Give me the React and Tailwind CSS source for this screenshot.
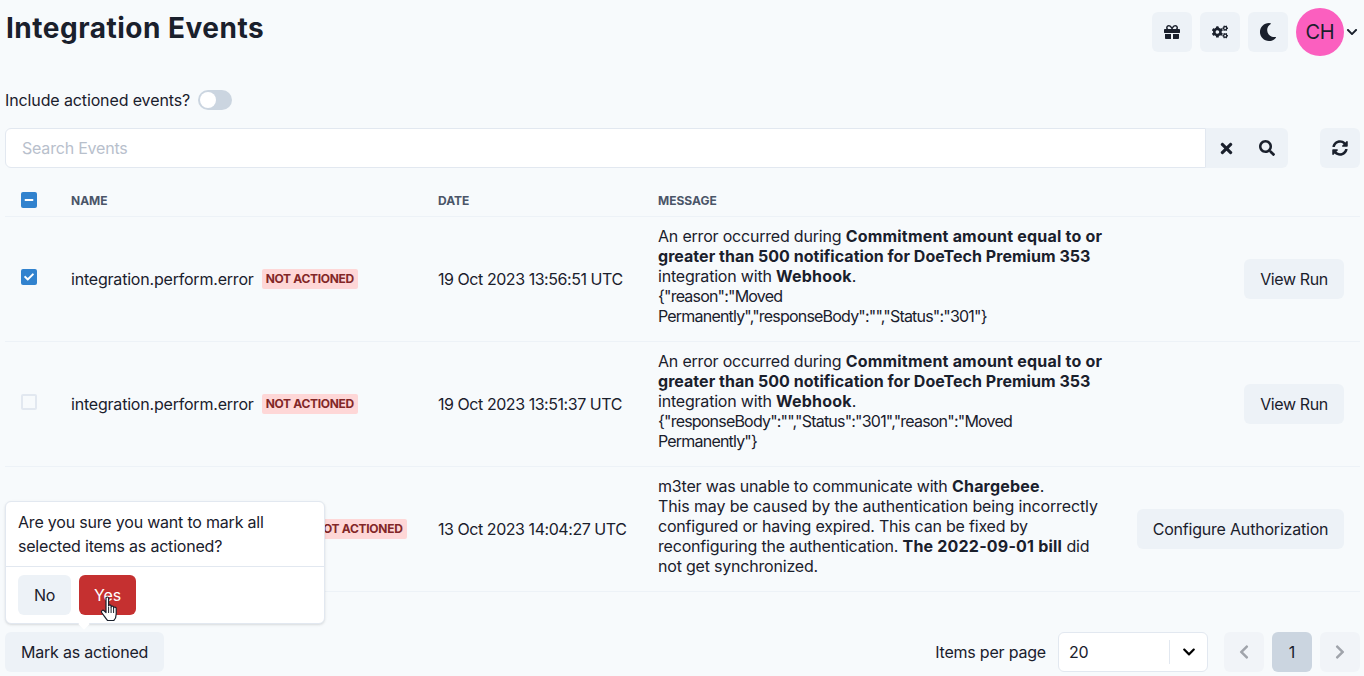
import React from "react";
import { FaGift, FaCogs, FaMoon, FaChevronDown, FaTimes, FaSearch, FaSyncAlt, FaChevronLeft, FaChevronRight, FaCheck, FaMinus } from "react-icons/fa";

const btn = "inline-flex items-center justify-center rounded-md bg-[#edf2f7] text-[#1a202c] text-[16px] font-normal";

function IconBtn({ children, className = "" }) {
  return <button className={`${btn} w-10 h-10 ${className}`}>{children}</button>;
}

function Badge() {
  return (
    <span className="inline-block shrink-0 rounded-[2px] bg-[#fed7d7] px-1 text-[12px] leading-[20px] font-bold uppercase text-[#822727] tracking-[-0.3px]">
      Not actioned
    </span>
  );
}

function Box({ state }) {
  if (state === "checked")
    return <span className="flex w-4 h-4 items-center justify-center rounded-[2px] bg-[#3182ce] text-white"><FaCheck size={10} /></span>;
  if (state === "minus")
    return <span className="flex w-4 h-4 items-center justify-center rounded-[2px] bg-[#3182ce] text-white"><FaMinus size={10} /></span>;
  return <span className="block w-4 h-4 rounded-[2px] border-2 border-[#e2e8f0]" />;
}

function Row({ box, name, nameClass = "", date, action, actionClass = "", children }) {
  return (
    <tr className="h-[125px] border-b border-[#edf2f7]">
      <td className="pl-4 pb-[3px] align-middle"><Box state={box} /></td>
      <td className="pl-4 align-middle">
        <div className="flex items-center gap-2">
          <span className={`whitespace-nowrap ${nameClass}`}>{name}</span>
          <Badge />
        </div>
      </td>
      <td className="pl-4 align-middle whitespace-nowrap tracking-[-0.45px]">{date}</td>
      <td className="pl-4 pr-4 pb-[6px] align-middle leading-[20px]">{children}</td>
      <td className="pr-4 align-middle text-right">
        <button className={`${btn} h-10 ${actionClass}`}>{action}</button>
      </td>
    </tr>
  );
}

const B = ({ children }) => <b className="font-bold tracking-[0.2px]">{children}</b>;
const B2 = ({ children }) => <b className="font-bold tracking-[0.03px]">{children}</b>;
const Json = ({ children }) => <span className="tracking-[-0.8px]">{children}</span>;

export default function App() {
  return (
    <div className="relative h-[676px] w-[1364px] overflow-hidden bg-[#f7fafc] text-[#1a202c] text-[16px] tracking-[-0.2px]" style={{ fontFamily: '"Inter", "Liberation Sans", sans-serif' }}>
      <div className="px-[5px] pr-1">
        <header className="flex items-start justify-between h-[60px] pt-2">
          <h1 className="pl-px pt-1 text-[28px] leading-[32px] font-bold tracking-[0.5px]">Integration Events</h1>
          <div className="flex items-center gap-2 pr-[2px]">
            <IconBtn><FaGift size={16} /></IconBtn>
            <IconBtn><FaCogs size={16} /></IconBtn>
            <IconBtn><FaMoon size={18} /></IconBtn>
            <div className="flex items-center">
              <div className="flex h-12 w-12 items-center justify-center rounded-full bg-[#fb5fbf] text-[20px] font-normal text-[#1a202c]">CH</div>
              <FaChevronDown size={12} className="ml-[2px]" />
            </div>
          </div>
        </header>

        <div className="mt-[28px] flex items-center gap-2 h-6">
          <span className="tracking-[-0.12px]">Include actioned events?</span>
          <span className="flex h-5 w-[34px] items-center rounded-full bg-[#cbd5e0] p-[2px]">
            <span className="h-4 w-4 rounded-full bg-white" />
          </span>
        </div>

        <div className="mt-[16px] flex items-center gap-8">
          <div className="flex h-10 flex-1">
            <div className="flex flex-1 items-center rounded-l-md border border-[#e2e8f0] bg-white pl-4 text-[#b8c0cc]">Search Events</div>
            <button className="flex h-10 w-10 items-center justify-center bg-[#edf2f7]"><FaTimes size={17} /></button>
            <button className="flex h-10 w-[42px] items-center justify-center rounded-r-md bg-[#edf2f7]"><FaSearch size={16} /></button>
          </div>
          <IconBtn><FaSyncAlt size={16} /></IconBtn>
        </div>

        <table className="mt-4 w-[1355px] table-fixed border-collapse">
          <colgroup>
            <col className="w-[50px]" />
            <col className="w-[367px]" />
            <col className="w-[220px]" />
            <col className="w-[479px]" />
            <col className="w-[239px]" />
          </colgroup>
          <thead>
            <tr className="h-[32px] border-b border-[#edf2f7] text-left text-[12px] font-bold uppercase tracking-[0px] text-[#4a5568]">
              <th className="pl-4"><Box state="minus" /></th>
              <th className="pl-4 pt-[2px]">Name</th>
              <th className="pl-4 pt-[2px]">Date</th>
              <th className="pl-4 pt-[2px]">Message</th>
              <th />
            </tr>
          </thead>
          <tbody>
            <Row box="checked" name="integration.perform.error" date="19 Oct 2023 13:56:51 UTC" action="View Run" actionClass="w-[100px] tracking-[-0.4px]">
              An error occurred during <B>Commitment amount equal to or</B> <B2>greater than 500 notification for DoeTech Premium 353</B2> integration with <B>Webhook</B>.
              <br /><Json>{'{"reason":"Moved Permanently","responseBody":"","Status":"301"}'}</Json>
            </Row>
            <Row box="empty" name="integration.perform.error" date="19 Oct 2023 13:51:37 UTC" action="View Run" actionClass="w-[100px] tracking-[-0.4px]">
              An error occurred during <B>Commitment amount equal to or</B> <B2>greater than 500 notification for DoeTech Premium 353</B2> integration with <B>Webhook</B>.
              <br /><Json>{'{"responseBody":"","Status":"301","reason":"Moved Permanently"}'}</Json>
            </Row>
            <Row box="checked" name="integration.authentication.error" nameClass="tracking-[-0.1px]" date="13 Oct 2023 14:04:27 UTC" action="Configure Authorization" actionClass="w-[207px]">
              m3ter was unable to communicate with <B>Chargebee</B>.
              <br /><span className="tracking-[-0.13px]">This may be caused by the authentication being incorrectly</span> configured or having expired. This can be fixed by reconfiguring the authentication. <B>The 2022-09-01 bill</B> did not get synchronized.
            </Row>
          </tbody>
        </table>

        <footer className="mt-10 flex items-center justify-between">
          <button className={`${btn} h-10 px-4`}>Mark as actioned</button>
          <div className="flex items-center">
            <span className="mr-3">Items per page</span>
            <div className="flex h-10 w-[150px] items-center rounded-md border border-[#e2e8f0] bg-white pl-[10px]">
              <span className="flex-1">20</span>
              <span className="h-6 w-px bg-[#e2e8f0]" />
              <span className="flex w-[37px] justify-center text-black"><FaChevronDown size={14} /></span>
            </div>
            <div className="ml-4 flex gap-2">
              <IconBtn className="bg-[#f1f4f8] text-[#a0a4ab]"><FaChevronLeft size={16} /></IconBtn>
              <button className="flex h-10 w-10 items-center justify-center rounded-md bg-[#cbd5e0]">1</button>
              <IconBtn className="bg-[#f1f4f8] text-[#a0a4ab]"><FaChevronRight size={16} /></IconBtn>
            </div>
          </div>
        </footer>
      </div>

      <div className="absolute left-[5px] top-[501px] w-[320px] rounded-md border border-[#e2e8f0] bg-white shadow-sm">
        <div className="border-b border-[#e2e8f0] px-3 py-2 leading-[24px]">Are you sure you want to mark all selected items as actioned?</div>
        <div className="flex gap-2 px-3 py-2">
          <button className={`${btn} h-10 w-[53px]`}>No</button>
          <button className={`${btn} h-10 w-[57px] !bg-[#c53030] !text-white`}>Yes</button>
        </div>
        <span className="absolute -bottom-[5px] left-[74px] h-2 w-2 rotate-45 bg-white" />
        <svg className="absolute left-[94px] top-[94px]" width="20" height="26" viewBox="0 0 20 26">
          <path d="M6 2.2c0-1.6 2.6-1.6 2.6 0V10c0-1.4 2.5-1.4 2.5 0v1c0-1.3 2.5-1.3 2.5 0v1c0-1.3 2.6-1.3 2.6 0.2V18c0 3-1.3 5.5-2.4 6.5H7.6C6 23 4.6 20.5 2 17c-1.6-2 .8-3.7 2.4-2L6 16.6Z" fill="#fff" stroke="#1a202c" strokeWidth="1.2" strokeLinejoin="round" />
          <path d="M8.6 11v6M11.1 11v6M13.6 12v5" stroke="#1a202c" strokeWidth="1" />
        </svg>
      </div>
    </div>
  );
}
